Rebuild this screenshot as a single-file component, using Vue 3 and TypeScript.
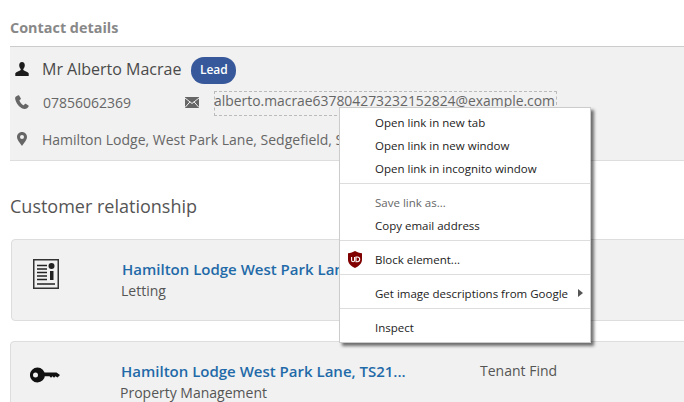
<script setup lang="ts">
interface MenuItem {
  label: string
  muted?: boolean
  icon?: boolean
  arrow?: boolean
}
const menuGroups: MenuItem[][] = [
  [{ label: 'Open link in new tab' }, { label: 'Open link in new window' }, { label: 'Open link in incognito window' }],
  [{ label: 'Save link as...', muted: true }, { label: 'Copy email address' }],
  [{ label: 'Block element...', icon: true }],
  [{ label: 'Get image descriptions from Google', arrow: true }],
  [{ label: 'Inspect' }],
]
</script>

<template>
  <div class="page">
    <h2 class="section-title">Contact details</h2>
    <section class="contact">
      <div class="row name-row">
        <svg class="ico person" viewBox="0 0 14 14" width="14" height="14"><path d="M7 0C5.100 0 4.200 1.400 4.200 3.200c0 1.500.6 2.900 1.500 3.700v1.200C4.600 9.200 1.200 10 .3 11.300V14h13.400v-2.700C12.800 10 9.400 9.200 8.300 8.100V6.900c.9-.8 1.500-2.200 1.500-3.700C9.800 1.400 8.900 0 7 0z" fill="#1c1c1c"/></svg>
        <span class="name">Mr Alberto Macrae</span>
        <span class="badge">Lead</span>
      </div>
      <div class="row phone-row">
        <svg class="ico phone" viewBox="0 0 14 14" width="14" height="14"><path d="M3.200.3 1 1.500C.1 2.200 0 3.300.3 4.500c.8 3 2 4.800 3.800 6.700 1.800 1.700 3.500 2.500 5.600 2.700 1.200.1 2.500-.4 3.200-1.400l.8-1.300c.1-.3 0-.6-.3-.8L10.700 8.800c-.3-.2-.6-.1-.8.100L8.900 10.100c-.2.200-.5.200-.7.100C6.600 9.300 5.100 7.500 4.500 5.800c-.1-.3 0-.5.200-.7l1-.8c.2-.2.300-.5.200-.8L4.100.6C3.900.2 3.500.1 3.200.3z" fill="#666"/></svg>
        <span class="phone-text">07856062369</span>
        <svg class="ico mail" viewBox="0 0 14 11" width="14" height="11"><rect width="14" height="11" fill="#666"/><path d="M0 1 7 6.500 14 1M0 10.500 5 4.800M14 10.500 9 4.800" fill="none" stroke="#f1f1f1" stroke-width="1"/></svg>
        <span class="email">alberto.macrae637804273232152824@example.com</span>
      </div>
      <div class="row addr-row">
        <svg class="ico pin" viewBox="0 0 10 14" width="10" height="14"><path fill-rule="evenodd" d="M5 0C2.200 0 0 2.200 0 5c0 3 3.400 6.500 5 9 1.600-2.500 5-6 5-9 0-2.800-2.200-5-5-5zm0 3a2 2 0 1 1 0 4 2 2 0 0 1 0-4z" fill="#666"/></svg>
        <span class="addr">Hamilton Lodge, West Park Lane, Sedgefield, S</span>
      </div>
    </section>

    <h2 class="rel-title">Customer relationship</h2>

    <article class="card first">
      <svg class="card-ico doc" viewBox="0 0 26 30" width="26" height="30">
        <rect x=".75" y=".75" width="24.500" height="28.500" fill="none" stroke="#333" stroke-width="1.500"/>
        <path d="M4 6.500h10M4 10h10M4 13.500h10M4 17h10M4 20.500h10M4 25h18" stroke="#222" stroke-width="1.500"/>
        <circle cx="18.500" cy="7" r="3" fill="#222"/>
        <rect x="17" y="12" width="3.500" height="9" fill="#222"/>
      </svg>
      <div class="card-body">
        <a class="card-link">Hamilton Lodge West Park Lane, TS21...</a>
        <div class="card-sub">Letting</div>
      </div>
    </article>

    <article class="card second">
      <svg class="card-ico key" viewBox="0 0 30 16" width="30" height="16">
        <path fill-rule="evenodd" d="M7.500.5a7.500 7.500 0 1 1-.1 15 7.500 7.500 0 0 1 .1-15zM5.500 5.500a2.500 2.500 0 1 0 0 5 2.500 2.500 0 0 0 0-5z" fill="#111"/>
        <path d="M13 5.500h13.500L30 8l-2.500 2.500-2-1.200-1.500 1.500-1.500-1.500-1.500 1.500-1.500-1.500H13z" fill="#111"/>
      </svg>
      <div class="card-body">
        <a class="card-link">Hamilton Lodge West Park Lane, TS21...</a>
        <div class="card-sub">Property Management</div>
      </div>
      <div class="card-type">Tenant Find</div>
    </article>

    <div class="menu">
      <div v-for="(group, g) in menuGroups" :key="g" class="menu-group">
        <div v-for="item in group" :key="item.label" class="menu-item" :class="{ muted: item.muted }">
          <svg v-if="item.icon" class="ublock" viewBox="0 0 16 17" width="16" height="17">
            <path d="M8 0c2 1.300 4.500 2 7 2.200v6.300c0 3.800-3 6.700-7 8.500-4-1.800-7-4.700-7-8.500V2.200C3.500 2 6 1.300 8 0z" fill="#800000"/>
            <path d="M4.600 6v3.200c0 1 .6 1.500 1.500 1.500s1.500-.5 1.500-1.500V6M9 6v4.700h1.400c1.500 0 2.300-1 2.300-2.350S11.900 6 10.400 6z" fill="none" stroke="#fff" stroke-width="1.100"/>
          </svg>
          <span>{{ item.label }}</span>
          <span v-if="item.arrow" class="arrow"></span>
        </div>
      </div>
    </div>
  </div>
</template>

<style>
html, body { margin: 0; background: #fff; }
</style>

<style scoped>
.page {
  position: relative;
  width: 684px;
  height: 402px;
  overflow: hidden;
  box-sizing: border-box;
  padding: 18px 0 0 10px;
  background: #fff;
  font-family: "Open Sans", sans-serif;
  color: #555;
}
.section-title {
  margin: 0 0 8px;
  font-size: 14.400px;
  line-height: 20px;
  font-weight: 700;
  color: #888;
}
.contact {
  box-sizing: border-box;
  height: 115px;
  background: #f1f1f1;
  border-top: 1px solid #ccc;
  border-bottom: 1px solid #ddd;
  padding-left: 5px;
  font-size: 14px;
  color: #666;
}
.row { display: flex; align-items: center; }
.name-row { height: 43px; }
.person { margin-right: 13px; }
.name { font-size: 16px; color: #4a4a4a; }
.badge {
  margin: 4px 0 0 10px;
  padding: 0 8.500px;
  height: 27px;
  line-height: 26px;
  border-radius: 13px;
  background: #37599b;
  color: #fff;
  font-size: 12px;
  font-weight: 600;
}
.phone-row { height: 24px; }
.phone { margin-right: 14px; }
.phone-text { width: 142px; }
.mail { margin-right: 15px; }
.email {
  box-sizing: border-box;
  margin-top: 3px;
  height: 25px;
  font-size: 13.900px;
  line-height: 18px;
  width: 343px;
  border: 1px dashed #bbb;
  white-space: nowrap;
  text-indent: -1px;
}
.addr-row { height: 44px; margin: 3px 0 0 2px; }
.pin { margin-right: 15px; }
.addr { white-space: nowrap; }
.rel-title {
  margin: 33px 0 21px;
  font-size: 18px;
  line-height: 24px;
  font-weight: 400;
  color: #555;
}
.card {
  box-sizing: border-box;
  display: flex;
  width: 700px;
  height: 82px;
  border: 1px solid #ddd;
  border-radius: 4px;
  background: #f1f1f1;
  font-size: 14px;
}
.first { margin-left: 1px; }
.second { margin-top: 20px; }
.card-ico { flex: none; }
.doc { margin: 19px 0 0 21px; }
.key { margin: 25px 0 0 19px; }
.card-body { width: 359px; flex: none; }
.first .card-body { width: 217px; margin-left: 63px; padding-top: 18px; }
.second .card-body { margin-left: 61px; padding-top: 18px; }
.card-link {
  display: block;
  overflow: hidden;
  font-size: 15px;
  font-weight: 600;
  line-height: 22px;
  color: #1f6aa8;
  white-space: nowrap;
}
.card-sub { line-height: 22px; margin-left: -1px; color: #555; }
.card-type { padding-top: 18px; line-height: 22px; }
.menu {
  position: absolute;
  left: 339px;
  top: 107px;
  box-sizing: border-box;
  width: 252px;
  padding-top: 3px;
  background: #fff;
  border: 1px solid #ccc;
  box-shadow: 3px 3px 3px rgba(0, 0, 0, .55);
  font-size: 11.500px;
  color: #222;
}
.menu-group { padding-bottom: 3px; }
.menu-group + .menu-group { border-top: 1px solid #ddd; padding-top: 7px; }
.menu-item {
  position: relative;
  display: flex;
  align-items: center;
  height: 23px;
  padding-left: 35px;
  white-space: nowrap;
}
.menu-item.muted { color: #666; }
.ublock { position: absolute; left: 7px; top: 3px; }
.arrow {
  position: absolute;
  left: 238px;
  top: 7px;
  border-left: 5px solid #555;
  border-top: 4px solid transparent;
  border-bottom: 4px solid transparent;
}
</style>
